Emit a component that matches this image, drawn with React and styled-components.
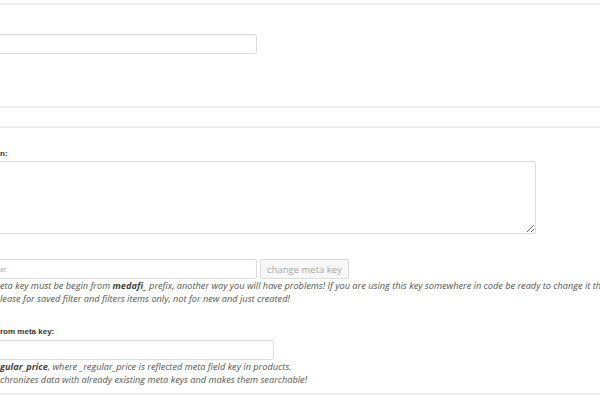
import React from "react";
import styled, { createGlobalStyle } from "styled-components";

const Global = createGlobalStyle`
  html, body { margin: 0; padding: 0; background: #fff; }
  body { overflow: hidden; width: 600px; height: 400px; font-family: "Open Sans", "Liberation Sans", sans-serif; }
`;

const Page = styled.div`
  width: 600px;
  height: 400px;
  overflow: hidden;
  padding-top: 3px;
  box-sizing: border-box;
`;

const Box = styled.section`
  border-top: 2px solid #eeeeee;
  border-bottom: 2px solid #eeeeee;
  height: ${(p) => p.$h}px;
  padding-top: ${(p) => p.$pt || 0}px;
  box-sizing: content-box;
  display: flex;
  flex-direction: column;
  align-items: flex-start;
  & > * { flex-shrink: 0; }
`;

const Gap = styled.div`
  height: ${(p) => p.$h}px;
`;

const TextInput = styled.input`
  box-sizing: border-box;
  margin: ${(p) => p.$mt || 0}px 0 0 -4px;
  width: ${(p) => p.$w}px;
  height: 20px;
  border: 1px solid #dddddd;
  border-radius: 2px;
  box-shadow: inset 0 1px 2px rgba(0, 0, 0, 0.04);
  background: #fff;
  padding: 0 3px;
  font-family: "Open Sans", sans-serif;
  font-size: 7px;
  font-style: italic;
  outline: none;
  &::placeholder { color: #a0a0a0; }
`;

const Area = styled.textarea`
  box-sizing: border-box;
  margin: 1px 0 0 -4px;
  width: 540px;
  height: 73px;
  border: 1px solid #dddddd;
  border-radius: 2px;
  box-shadow: inset 0 1px 2px rgba(0, 0, 0, 0.05);
  resize: both;
  outline: none;
  display: block;
`;

const Label = styled.div`
  margin-top: ${(p) => p.$mt}px;
  font-family: "Liberation Sans", Arial, sans-serif;
  font-weight: bold;
  font-size: 8px;
  line-height: 12px;
  color: #333;
  white-space: nowrap;
`;

const Row = styled.div`
  display: flex;
  align-items: center;
  gap: 3px;
  margin-top: 25px;
`;

const Button = styled.button`
  box-sizing: border-box;
  height: 20px;
  width: 89px;
  padding: 0 6px;
  border: 1px solid #dddddd;
  border-radius: 2px;
  background: #f7f7f7;
  color: #a8a8a8;
  font-family: "Open Sans", sans-serif;
  font-size: 9.5px;
  white-space: nowrap;
`;

const Desc = styled.p`
  margin: 0;
  font-family: "Open Sans", sans-serif;
  font-style: italic;
  font-size: 9.2px;
  line-height: 13px;
  color: #555;
  white-space: nowrap;
  b { font-weight: 700; color: #444; }
`;

export default function App() {
  return (
    <>
      <Global />
      <Page>
        <Box $h={72} $pt={29}>
          <TextInput $w={261} />
        </Box>
        <Gap $h={18} />
        <Box $h={265}>
          <Label $mt={20}>n:</Label>
          <Area />
          <Row>
            <TextInput $w={261} placeholder="er" />
            <Button>change meta key</Button>
          </Row>
          <Desc>
            eta key must be begin from <b>medafi_</b> prefix, another way you will have problems! If you are using this key somewhere in code be ready to change it there!
            <br />
            lease for saved filter and filters items only, not for new and just created!
          </Desc>
          <Label $mt={21}>rom meta key:</Label>
          <TextInput $w={278} $mt={2} />
          <Desc>
            <b>gular_price</b>, where _regular_price is reflected meta field key in products.
            <br />
            chronizes data with already existing meta keys and makes them searchable!
          </Desc>
        </Box>
      </Page>
    </>
  );
}
